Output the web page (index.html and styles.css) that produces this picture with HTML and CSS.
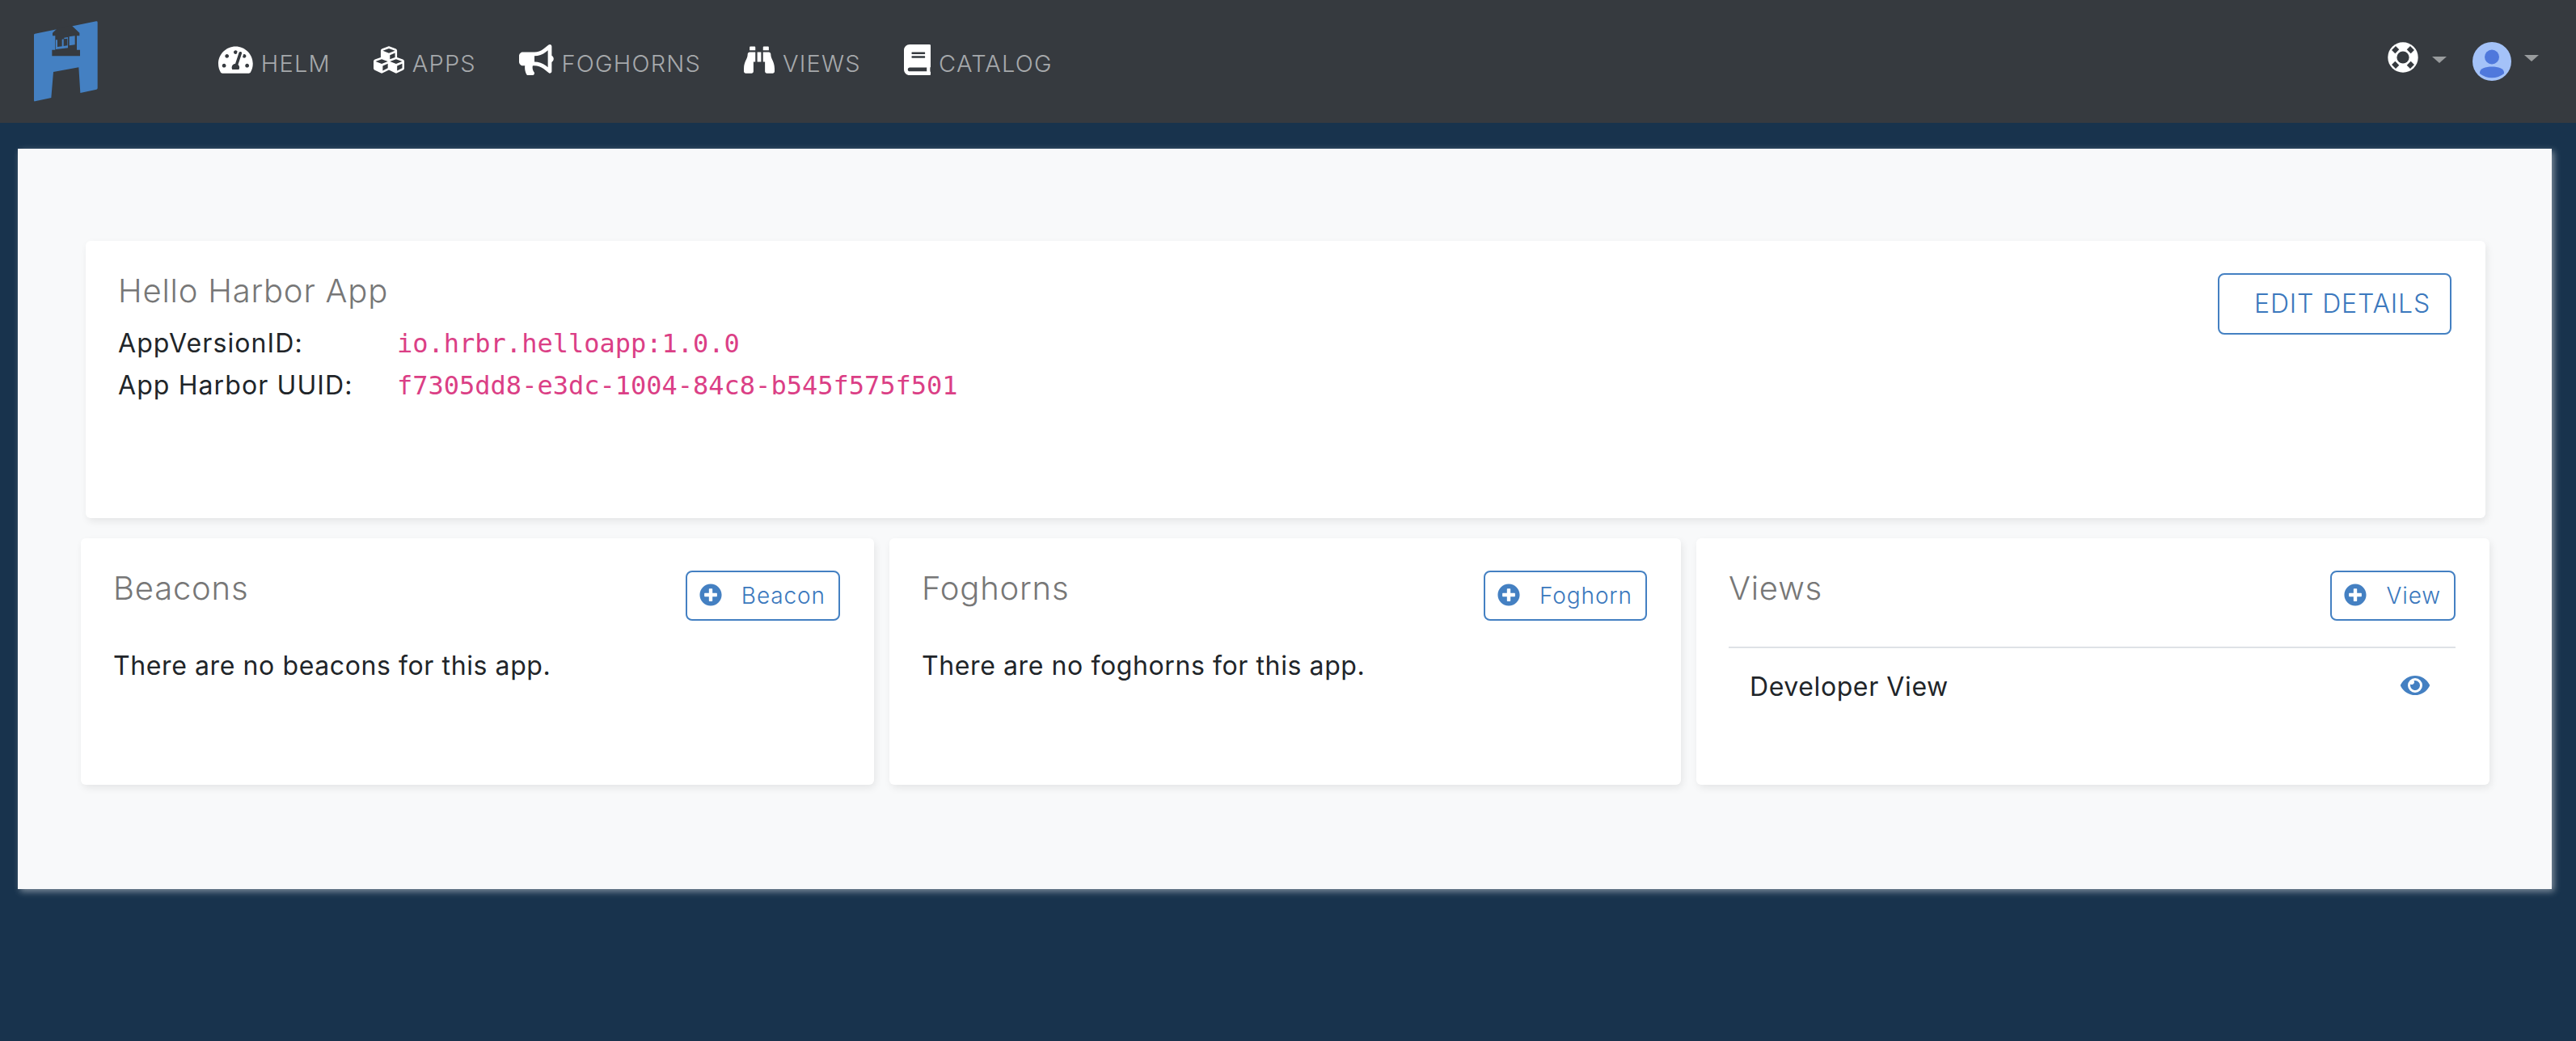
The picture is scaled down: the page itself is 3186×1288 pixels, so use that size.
FILE: index.html
```html
<!DOCTYPE html>
<html lang="en">
<head>
    <meta charset="UTF-8">
    <title>Hello Harbor App</title>
    <link rel="stylesheet" href="styles.css">
</head>
<body>

<nav class="navbar">
    <svg class="logo" viewBox="0 0 360 390">
        <path fill="#4480c2" d="M70 95L297 49Q302 48 302 53L302 297Q302 301 298 302L238 315L232 220L138 237L130 333L70 346Q66 347 66 343L66 99Q66 96 70 95Z"/>
        <path fill="#363a3f" d="M152 76L205 64L235 92L235 103L225 103L225 155L237 155L237 178L133 178L133 155L145 155L145 103L135 103L135 92Z"/>
        <path fill="#4480c2" d="M147 118L153 118L153 144L170 142L170 116L176 115L176 141L190 139L190 113L178 115L178 110L192 108L192 148L147 153ZM197 106L218 103L218 136L197 139Z"/>
    </svg>

    <div class="nav-links">
        <a class="nav-link">
            <svg class="nav-icon" viewBox="0 0 576 512"><path d="M288 32C128.94 32 0 160.94 0 320c0 52.8 14.25 102.26 39.06 144.8 5.61 9.62 16.3 15.2 27.44 15.2h443c11.14 0 21.83-5.58 27.44-15.2C561.75 422.26 576 372.8 576 320c0-159.06-128.94-288-288-288zm0 64c14.71 0 26.58 10.13 30.32 23.65-1.11 2.26-2.64 4.23-3.45 6.67l-9.22 27.67c-5.13 3.49-10.97 6.01-17.64 6.01-17.67 0-32-14.33-32-32S270.33 96 288 96zM96 384c-17.67 0-32-14.33-32-32s14.33-32 32-32 32 14.33 32 32-14.33 32-32 32zm48-160c-17.67 0-32-14.33-32-32s14.33-32 32-32 32 14.33 32 32-14.33 32-32 32zm246.77-72.41l-61.33 184C343.13 347.33 352 364.54 352 384c0 11.72-3.38 22.55-8.88 32H232.88c-5.5-9.45-8.88-20.28-8.88-32 0-33.94 26.5-61.43 59.9-63.59l61.34-184.01c4.17-12.56 17.73-19.45 30.36-15.17 12.57 4.19 19.35 17.79 15.17 30.36zm14.66 57.2l15.52-46.55c3.47-1.29 7.13-2.23 11.05-2.23 17.67 0 32 14.33 32 32s-14.33 32-32 32c-11.38-.01-20.89-6.28-26.57-15.22zM480 384c-17.67 0-32-14.33-32-32s14.33-32 32-32 32 14.33 32 32-14.33 32-32 32z"/></svg>
            HELM
        </a>
        <a class="nav-link">
            <svg class="nav-icon" viewBox="0 0 512 512"><path d="M488.6 250.2L392 214V105.5c0-15-9.3-28.4-23.4-33.7l-100-37.5c-8.1-3.1-17.1-3.1-25.3 0l-100 37.5c-14.1 5.3-23.4 18.7-23.4 33.7V214l-96.6 36.2C9.3 255.5 0 268.9 0 283.9V394c0 13.6 7.7 26.1 19.9 32.2l100 50c10.1 5.1 22.1 5.1 32.2 0l103.9-52 103.9 52c10.1 5.1 22.1 5.1 32.2 0l100-50c12.2-6.1 19.9-18.6 19.9-32.2V283.9c0-15-9.3-28.4-23.4-33.7zM358 214.8l-85 31.9v-68.2l85-37v73.3zM154 104.1l102-38.2 102 38.2v.6l-102 41.4-102-41.4v-.6zm84 291.1l-85 42.5v-79.1l85-38.8v75.4zm0-112l-102 41.4-102-41.4v-.6l102-38.2 102 38.2v.6zm240 112l-85 42.5v-79.1l85-38.8v75.4zm0-112l-102 41.4-102-41.4v-.6l102-38.2 102 38.2v.6z"/></svg>
            APPS
        </a>
        <a class="nav-link">
            <svg class="nav-icon" viewBox="0 0 576 512"><path d="M576 240c0-23.63-12.95-44.04-32-55.12V32.01C544 23.26 537.02 0 512 0c-7.12 0-14.19 2.38-19.98 7.02l-85.03 68.03C364.28 109.19 310.66 128 256 128H64c-35.35 0-64 28.65-64 64v96c0 35.35 28.65 64 64 64h33.7c-1.39 10.48-2.18 21.14-2.18 32 0 39.77 9.26 77.35 25.56 110.94 5.19 10.69 16.52 17.06 28.4 17.06h74.28c26.05 0 41.69-29.84 25.9-50.56-16.4-21.52-26.15-48.36-26.15-77.44 0-11.11 1.62-21.79 4.41-32H256c54.66 0 108.28 18.81 150.98 52.95l85.03 68.03a32.023 32.023 0 0 0 19.98 7.02c24.92 0 32-22.78 32-32V295.13C563.05 284.04 576 263.63 576 240zm-96 141.42l-33.05-26.44C392.95 311.78 325.12 288 256 288v-96c69.12 0 136.95-23.78 190.95-66.98L480 98.58v282.84z"/></svg>
            FOGHORNS
        </a>
        <a class="nav-link">
            <svg class="nav-icon" viewBox="0 0 512 512"><path d="M416 48c0-8.84-7.16-16-16-16h-64c-8.84 0-16 7.16-16 16v48h96V48zM63.91 159.99C61.4 253.84 3.46 274.22 0 404v44c0 17.67 14.33 32 32 32h96c17.67 0 32-14.33 32-32V288h32V128H95.84c-17.63 0-31.45 14.37-31.93 31.99zm384.18 0c-.48-17.62-14.3-31.99-31.93-31.99H320v160h32v160c0 17.67 14.33 32 32 32h96c17.67 0 32-14.33 32-32v-44c-3.46-129.78-61.4-150.16-63.91-244.01zM176 32h-64c-8.84 0-16 7.16-16 16v48h96V48c0-8.84-7.16-16-16-16zm48 256h64V128h-64v160z"/></svg>
            VIEWS
        </a>
        <a class="nav-link">
            <svg class="nav-icon" viewBox="0 0 448 512"><path d="M448 360V24c0-13.3-10.7-24-24-24H96C43 0 0 43 0 96v320c0 53 43 96 96 96h328c13.3 0 24-10.7 24-24v-16c0-7.5-3.5-14.3-8.9-18.7-4.2-15.4-4.2-59.3 0-74.7 5.4-4.3 8.9-11.1 8.9-18.6zM128 134c0-3.3 2.7-6 6-6h212c3.3 0 6 2.7 6 6v20c0 3.3-2.7 6-6 6H134c-3.3 0-6-2.7-6-6v-20zm0 64c0-3.3 2.7-6 6-6h212c3.3 0 6 2.7 6 6v20c0 3.3-2.7 6-6 6H134c-3.3 0-6-2.7-6-6v-20zm253.4 250H96c-17.7 0-32-14.3-32-32 0-17.6 14.4-32 32-32h285.4c-1.9 17.1-1.9 46.9 0 64z"/></svg>
            CATALOG
        </a>
    </div>

    <div class="nav-right">
        <svg class="help-icon" viewBox="0 0 38 38">
            <circle cx="19" cy="19" r="18.7" fill="#fff"/>
            <circle cx="19" cy="19" r="7.6" fill="#363a3f"/>
            <g fill="#363a3f">
                <rect x="15.5" y="2.8" width="7" height="6" transform="rotate(45 19 19)"/>
                <rect x="15.5" y="2.8" width="7" height="6" transform="rotate(135 19 19)"/>
                <rect x="15.5" y="2.8" width="7" height="6" transform="rotate(225 19 19)"/>
                <rect x="15.5" y="2.8" width="7" height="6" transform="rotate(315 19 19)"/>
            </g>
        </svg>
        <span class="caret caret-help"></span>
        <svg class="avatar" viewBox="0 0 48 48">
            <circle cx="24" cy="24" r="24" fill="#a4c2f8"/>
            <circle cx="24" cy="18.5" r="9" fill="#4f78dc"/>
            <path fill="#4f78dc" d="M9 37.5C9 33 16 30.5 24 30.5S39 33 39 37.5V39A24 24 0 0 1 9 39Z"/>
        </svg>
        <span class="caret caret-user"></span>
    </div>
</nav>

<main class="panel">
    <section class="card app-card">
        <div>
            <h2 class="card-title app-title">Hello Harbor App</h2>
            <div class="detail-row">
                <span>AppVersionID:</span>
                <code>io.hrbr.helloapp:1.0.0</code>
            </div>
            <div class="detail-row">
                <span>App Harbor UUID:</span>
                <code>f7305dd8-e3dc-1004-84c8-b545f575f501</code>
            </div>
        </div>
        <button class="btn btn-edit">EDIT DETAILS</button>
    </section>

    <div class="card-row">
        <section class="card">
            <div class="card-head">
                <h3 class="card-title">Beacons</h3>
                <button class="btn btn-add">
                    <svg class="plus-icon" viewBox="0 0 512 512"><path d="M256 8C119 8 8 119 8 256s111 248 248 248 248-111 248-248S393 8 256 8zm144 276c0 6.6-5.4 12-12 12h-92v92c0 6.6-5.4 12-12 12h-56c-6.6 0-12-5.4-12-12v-92h-92c-6.6 0-12-5.4-12-12v-56c0-6.6 5.4-12 12-12h92v-92c0-6.6 5.4-12 12-12h56c6.6 0 12 5.4 12 12v92h92c6.6 0 12 5.4 12 12v56z"/></svg>
                    Beacon
                </button>
            </div>
            <p class="empty-text">There are no beacons for this app.</p>
        </section>

        <section class="card">
            <div class="card-head">
                <h3 class="card-title">Foghorns</h3>
                <button class="btn btn-add">
                    <svg class="plus-icon" viewBox="0 0 512 512"><path d="M256 8C119 8 8 119 8 256s111 248 248 248 248-111 248-248S393 8 256 8zm144 276c0 6.6-5.4 12-12 12h-92v92c0 6.6-5.4 12-12 12h-56c-6.6 0-12-5.4-12-12v-92h-92c-6.6 0-12-5.4-12-12v-56c0-6.6 5.4-12 12-12h92v-92c0-6.6 5.4-12 12-12h56c6.6 0 12 5.4 12 12v92h92c6.6 0 12 5.4 12 12v56z"/></svg>
                    Foghorn
                </button>
            </div>
            <p class="empty-text">There are no foghorns for this app.</p>
        </section>

        <section class="card">
            <div class="card-head">
                <h3 class="card-title">Views</h3>
                <button class="btn btn-add">
                    <svg class="plus-icon" viewBox="0 0 512 512"><path d="M256 8C119 8 8 119 8 256s111 248 248 248 248-111 248-248S393 8 256 8zm144 276c0 6.6-5.4 12-12 12h-92v92c0 6.6-5.4 12-12 12h-56c-6.6 0-12-5.4-12-12v-92h-92c-6.6 0-12-5.4-12-12v-56c0-6.6 5.4-12 12-12h92v-92c0-6.6 5.4-12 12-12h56c6.6 0 12 5.4 12 12v92h92c6.6 0 12 5.4 12 12v56z"/></svg>
                    View
                </button>
            </div>
            <div class="view-list">
                <div class="view-item">
                    <span>Developer View</span>
                    <svg class="eye-icon" viewBox="0 0 576 512"><path d="M572.52 241.4C518.29 135.59 410.93 64 288 64S57.68 135.64 3.48 241.41a32.35 32.35 0 0 0 0 29.19C57.71 376.41 165.07 448 288 448s230.32-71.64 284.52-177.41a32.35 32.35 0 0 0 0-29.19zM288 400a144 144 0 1 1 144-144 143.93 143.93 0 0 1-144 144zm0-240a95.31 95.31 0 0 0-25.31 3.79 47.85 47.85 0 0 1-66.9 66.9A95.78 95.78 0 1 0 288 160z"/></svg>
                </div>
            </div>
        </section>
    </div>
</main>

</body>
</html>
```

FILE: styles.css
```css
body {
    margin: 0;
    height: 1288px;
    overflow: hidden;
    background-color: #18334d;
    font-family: Inter, sans-serif;
    font-size: 32px;
    letter-spacing: 0.6px;
    color: #212529;
}

.navbar {
    display: flex;
    align-items: center;
    height: 152px;
    padding: 0 46px 0 20px;
    background-color: #363a3f;
}

.logo {
    width: 120px;
    height: 130px;
    margin-bottom: 2px;
}

.nav-links {
    display: flex;
    align-items: center;
    gap: 53px;
    margin-left: 130px;
    margin-top: 4px;
}

.nav-link {
    display: flex;
    align-items: center;
    gap: 10px;
    font-size: 29px;
    font-weight: 300;
    letter-spacing: 1.2px;
    color: #a6a9ac;
}

.nav-icon {
    height: 38px;
    margin-bottom: 8px;
    fill: #fff;
}

.nav-right {
    display: flex;
    align-items: center;
    margin-left: auto;
}

.help-icon {
    width: 38px;
    height: 38px;
    margin-bottom: 10px;
}

.caret {
    width: 0;
    height: 0;
    border-top: 8px solid #999c9e;
    border-left: 9px solid transparent;
    border-right: 9px solid transparent;
}

.caret-help {
    margin: 0 32px 4px 17px;
}

.caret-user {
    margin: 0 0 8px 16px;
}

.avatar {
    width: 48px;
    height: 48px;
}

.panel {
    height: 916px;
    box-sizing: border-box;
    margin: 32px 30px 0 22px;
    padding: 114px 77px 0 78px;
    background-color: #f8f9fa;
    box-shadow: 3px 3px 8px rgba(255, 255, 255, 0.45);
}

.card {
    box-sizing: border-box;
    padding: 40px 42px 0 40px;
    background-color: #fff;
    border-radius: 6px;
    box-shadow: 2px 4px 10px rgba(0, 0, 0, 0.08);
}

.app-card {
    display: flex;
    justify-content: space-between;
    align-items: flex-start;
    height: 343px;
    margin: 0 5px 25px 6px;
}

.card-title {
    margin: 0;
    font-size: 40px;
    font-weight: 300;
    line-height: 43px;
    letter-spacing: 0.8px;
    color: #777;
}

.app-title {
    margin-bottom: 18px;
}

.detail-row {
    display: grid;
    grid-template-columns: 345px auto;
    align-items: baseline;
    line-height: 51px;
    letter-spacing: 1.1px;
}

code {
    font-family: "DejaVu Sans Mono", monospace;
    font-size: 32px;
    letter-spacing: 0;
    color: #db3f86;
}

.btn {
    display: flex;
    align-items: center;
    box-sizing: border-box;
    background-color: #fff;
    border: 2px solid #4480c2;
    border-radius: 8px;
    font-family: Inter, sans-serif;
    font-weight: 300;
    color: #3b78bd;
}

.btn-edit {
    height: 76px;
    padding: 0 24px 2px 43px;
    font-size: 32px;
    letter-spacing: 0.85px;
}

.btn-add {
    gap: 24px;
    height: 62px;
    padding: 0 16px 0 15px;
    font-size: 28px;
    letter-spacing: 0.9px;
}

.plus-icon {
    width: 28px;
    height: 28px;
    margin-top: -2px;
    fill: #4480c2;
}

.card-row {
    display: grid;
    grid-template-columns: 981px 979px 981px;
    gap: 19px;
}

.card-row .card {
    height: 305px;
}

.card-head {
    display: flex;
    justify-content: space-between;
    align-items: flex-start;
}

.empty-text {
    margin: 32px 0 0;
    line-height: 48px;
}

.view-list {
    margin-top: 32px;
    border-top: 2px solid #dee2e6;
}

.view-item {
    display: flex;
    justify-content: space-between;
    align-items: center;
    padding: 24px 32px 0 26px;
    line-height: 48px;
}

.eye-icon {
    width: 36px;
    height: 32px;
    margin-bottom: 4px;
    fill: #4480c2;
}
```
